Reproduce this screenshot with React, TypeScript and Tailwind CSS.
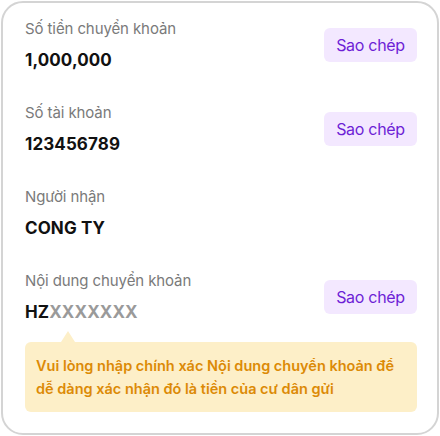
import React from "react";

const font = { fontFamily: "Inter, 'Noto Sans', sans-serif" };

function Row({ label, value, copy }: { label: string; value: React.ReactNode; copy?: boolean }) {
  return (
    <div className="flex items-center justify-between">
      <div className="flex flex-col gap-[7px]">
        <div className="text-[15px] leading-[24px] text-[#7a7a7a] tracking-[-0.1px]">{label}</div>
        <div className="text-[17px] leading-[24px] font-bold text-[#111] tracking-[0.1px]">{value}</div>
      </div>
      {copy && (
        <button className="h-[34px] w-[93px] rounded-[6px] bg-[#f3e8ff] text-[16px] text-[#6d1fd6] font-normal tracking-[-0.3px]">
          Sao chép
        </button>
      )}
    </div>
  );
}

export default function App() {
  return (
    <div className="w-[440px] h-[436px] p-px bg-white" style={font}>
      <div className="h-full w-full rounded-[22px] border-2 border-[#d4d4d4] bg-white pl-[22px] pr-[20px] pt-[14px] pb-[20px] flex flex-col gap-[29px]">
        <Row label="Số tiền chuyển khoản" value="1,000,000" copy />
        <Row label="Số tài khoản" value="123456789" copy />
        <Row label="Người nhận" value="CONG TY" />
        <div className="flex flex-col">
          <Row
            label="Nội dung chuyển khoản"
            value={
              <span>
                HZ<span className="text-[#9a9a9a]">XXXXXXX</span>
              </span>
            }
            copy
          />
          <div className="relative mt-[18px] rounded-[6px] bg-[#fdefc8] pl-[11px] pr-[10px] py-[12px] text-[14.5px] leading-[23px] font-semibold text-[#dc8a06]">
            <div className="absolute left-[36px] -top-[11px] h-0 w-0 border-l-[7px] border-r-[7px] border-b-[11px] border-l-transparent border-r-transparent border-b-[#fdefc8]" />
            Vui lòng nhập chính xác Nội dung chuyển khoản để dễ dàng xác nhận đó là tiền của cư dân gửi
          </div>
        </div>
      </div>
    </div>
  );
}
